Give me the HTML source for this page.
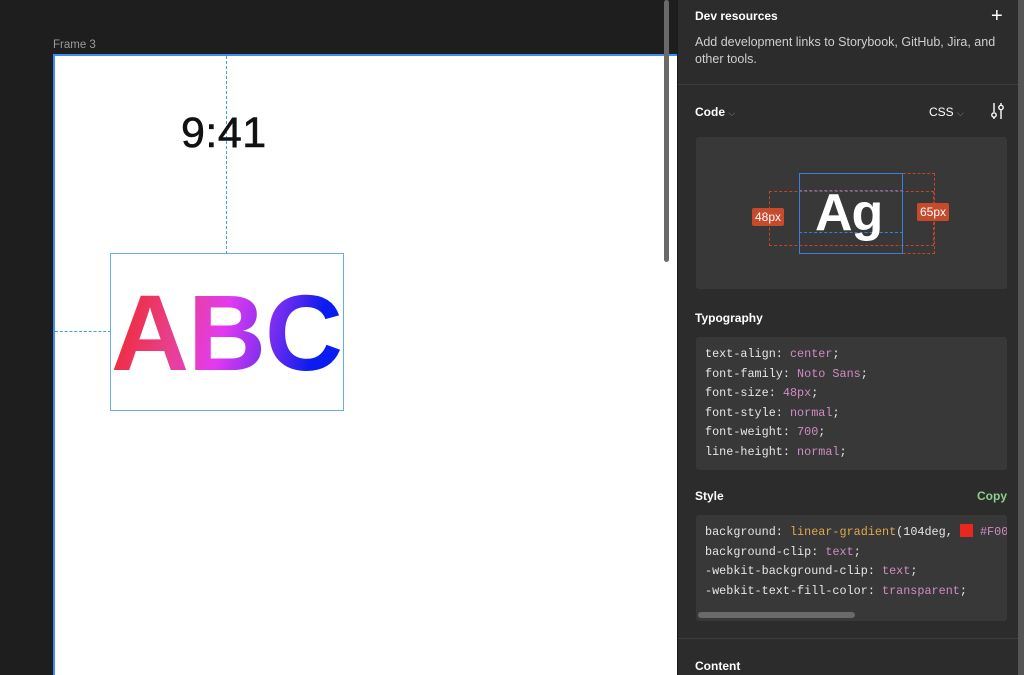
<!DOCTYPE html>
<html><head><style>
*{margin:0;padding:0;box-sizing:border-box}
html,body{width:1024px;height:675px;overflow:hidden}
body{background:#1e1e1e;position:relative;font-family:"Liberation Sans",sans-serif}
.abs{position:absolute}
.panel{left:677px;top:0;width:347px;height:675px;background:#2c2c2c;border-left:1px solid #1a1a1a}
.h{color:#fff;font-weight:bold;font-size:12px}
.box{background:#383838;border-radius:3px}
.code{font-family:"Liberation Mono",monospace;font-size:11.8px;color:#e6e6e6;line-height:19.5px;white-space:pre}
.v{color:#d08bc4}.f{color:#e0a84c}
</style></head><body>
<div class="abs" style="left:53px;top:39px;color:#9a9a9a;font-size:11.5px">Frame 3</div>
<div class="abs" style="left:53px;top:54px;width:624px;height:621px;background:#fff;border-left:2px solid #3d8ef0;border-top:2px solid #3d8ef0"></div>
<div class="abs" style="left:226px;top:56px;height:198px;border-left:1px dashed #3aa0f0"></div>
<div class="abs" style="left:55px;top:331px;width:56px;border-top:1px dashed #3aa0f0"></div>
<div class="abs" style="left:181px;top:109px;font-size:43px;color:#111;letter-spacing:0.5px;-webkit-text-stroke:0.6px #111">9:41</div>
<div class="abs" style="left:110px;top:253px;width:234px;height:158px;border:1px solid #6aaaf0"></div>
<div class="abs" style="left:111px;top:274px;font-size:108px;font-weight:bold;letter-spacing:-1px;background:linear-gradient(104deg,#f0261c 0%,#e84090 30%,#e43af0 48%,#6a2cf0 70%,#0a1cf0 85%);-webkit-background-clip:text;background-clip:text;-webkit-text-fill-color:transparent;line-height:1.1">ABC</div>
<div class="abs" style="left:664px;top:0;width:5px;height:262px;background:#6a6a6a;border-radius:3px"></div>

<div class="abs panel">
<div class="abs h" style="left:17px;top:9px">Dev resources</div>
<div class="abs" style="left:313px;top:5px;color:#fff;font-size:20px;font-weight:300">+</div>
<div class="abs" style="left:17px;top:34px;width:315px;color:#cfcfcf;font-size:12.5px;line-height:17px">Add development links to Storybook, GitHub, Jira, and other tools.</div>
<div class="abs" style="left:0;top:84px;width:347px;border-top:1px solid #3d3d3d"></div>
<div class="abs h" style="left:17px;top:105px">Code <span style="color:#888;font-weight:normal;font-size:9px">⌵</span></div>
<div class="abs h" style="left:251px;top:105px;font-weight:normal">CSS <span style="color:#888;font-size:9px">⌵</span></div>
<svg class="abs" style="left:312px;top:102px" width="16" height="18" viewBox="0 0 16 18" fill="none" stroke="#fff" stroke-width="1.4"><line x1="4" y1="1" x2="4" y2="10"/><circle cx="4" cy="13" r="2.2"/><line x1="4" y1="15" x2="4" y2="17"/><line x1="11" y1="1" x2="11" y2="3"/><circle cx="11" cy="5.5" r="2.2"/><line x1="11" y1="8" x2="11" y2="17"/></svg>
<div class="abs box" style="left:18px;top:137px;width:311px;height:152px"></div>
<div class="abs" style="left:91px;top:191px;width:165px;height:55px;border:1px dashed #c0442e"></div>
<div class="abs" style="left:121px;top:173px;width:104px;height:81px;border:1px solid #3d7ed8"></div>
<div class="abs" style="left:121px;top:190px;width:104px;border-top:1px dashed #3d7ed8"></div>
<div class="abs" style="left:121px;top:232px;width:104px;border-top:1px dashed #3d7ed8"></div>
<div class="abs" style="left:225px;top:173px;width:32px;height:81px;border:1px dashed #c0442e;border-left:none"></div>
<div class="abs" style="left:137px;top:183px;color:#fff;font-size:52px;font-weight:bold;letter-spacing:-1px">Ag</div>
<div class="abs" style="left:74px;top:208px;background:#c84a2c;color:#fff;font-size:12px;padding:2px 3px;border-radius:2px">48px</div>
<div class="abs" style="left:239px;top:203px;background:#c84a2c;color:#fff;font-size:12px;padding:2px 3px;border-radius:2px">65px</div>
<div class="abs h" style="left:17px;top:311px">Typography</div>
<div class="abs box code" style="left:18px;top:337px;width:311px;height:133px;padding:8px 9px">text-align: <span class="v">center</span>;
font-family: <span class="v">Noto Sans</span>;
font-size: <span class="v">48px</span>;
font-style: <span class="v">normal</span>;
font-weight: <span class="v">700</span>;
line-height: <span class="v">normal</span>;</div>
<div class="abs h" style="left:17px;top:489px">Style</div>
<div class="abs" style="left:299px;top:489px;color:#8ccf8c;font-size:12px;font-weight:bold">Copy</div>
<div class="abs box code" style="left:18px;top:515px;width:311px;height:106px;padding:8px 9px;overflow:hidden">background: <span class="f">linear-gradient</span>(104deg, <span style="display:inline-block;width:13px;height:13px;background:#e8281e;vertical-align:-2px"></span> <span class="v">#F00</span>
background-clip: <span class="v">text</span>;
-webkit-background-clip: <span class="v">text</span>;
-webkit-text-fill-color: <span class="v">transparent</span>;</div>
<div class="abs" style="left:20px;top:612px;width:157px;height:6px;background:#6a6a6a;border-radius:3px"></div>
<div class="abs" style="left:0;top:638px;width:347px;border-top:1px solid #3d3d3d"></div>
<div class="abs h" style="left:17px;top:659px">Content</div>
<div class="abs" style="left:340px;top:0;width:6px;height:675px;background:#555"></div>
</div>
</body></html>
